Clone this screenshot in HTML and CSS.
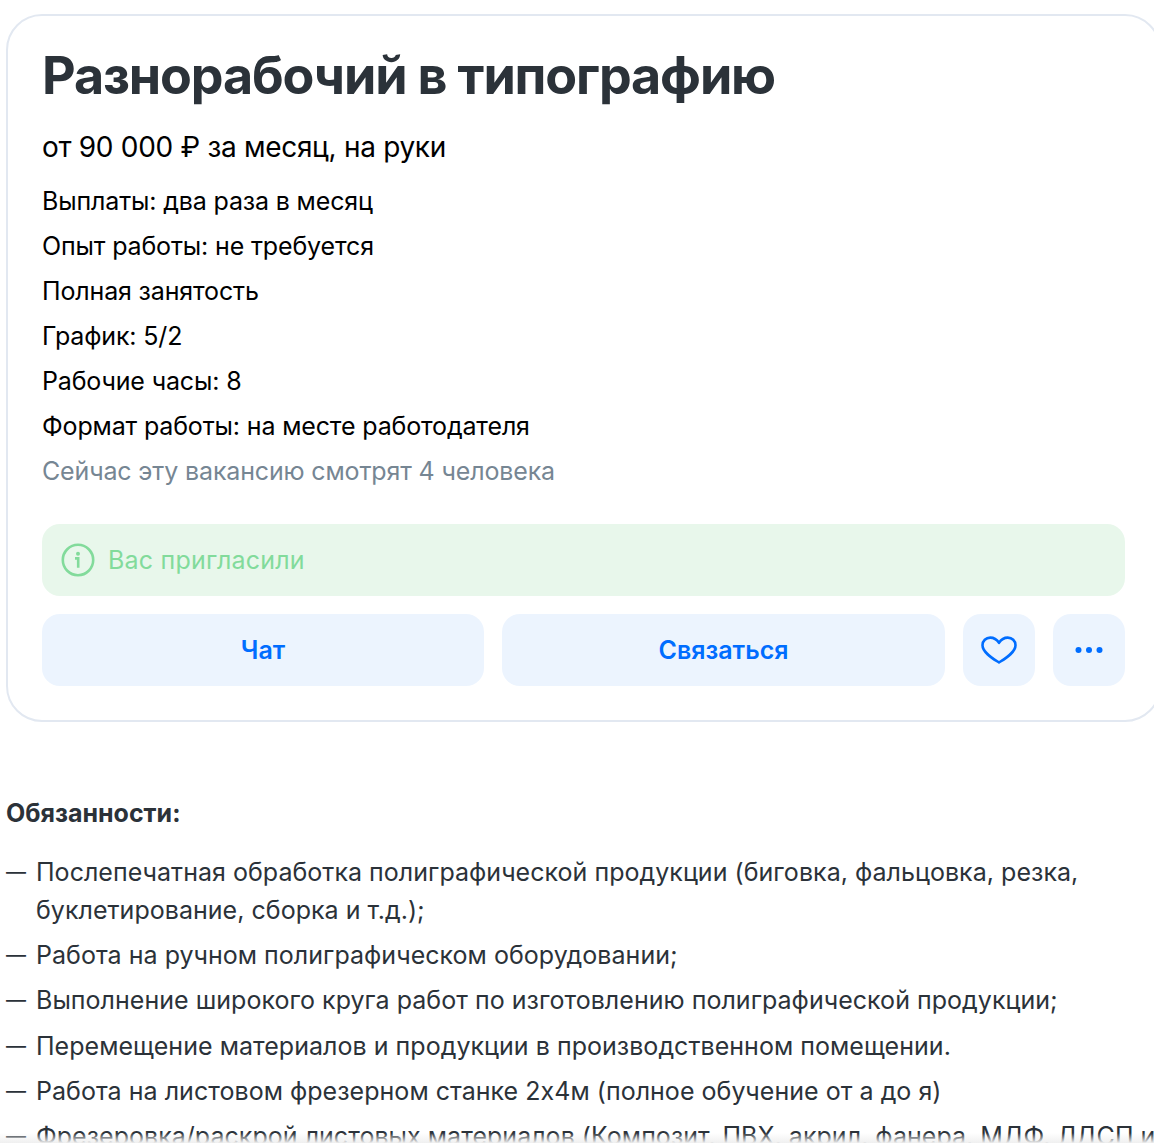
FILE: index.html
```html
<!DOCTYPE html>
<html lang="ru">
  <head>
    <title>Разнорабочий в типографию</title>
    <meta charset="utf-8" />
    <link rel="stylesheet" href="styles.css">
  </head>
  <body>
    <div class="page">
      <div class="vacancy-card">
        <h1 class="vacancy-title">Разнорабочий в типографию</h1>
        <p class="salary">от 90 000 ₽ за месяц, на руки</p>
        <p class="info-row">Выплаты: два раза в месяц</p>
        <p class="info-row">Опыт работы: не требуется</p>
        <p class="info-row">Полная занятость</p>
        <p class="info-row">График: 5/2</p>
        <p class="info-row">Рабочие часы: 8</p>
        <p class="info-row">Формат работы: на месте работодателя</p>
        <p class="info-row viewers">Сейчас эту вакансию смотрят 4 человека</p>

        <div class="invite-box">
          <svg class="invite-icon" width="34" height="34" viewBox="0 0 34 34" fill="none">
            <circle cx="17" cy="17" r="15.2" stroke="currentColor" stroke-width="2.6"/>
            <circle cx="17" cy="10.8" r="2" fill="currentColor"/>
            <path d="M14 15.400h3.200v9.400" stroke="currentColor" stroke-width="2.6"/>
          </svg>
          <span>Вас пригласили</span>
        </div>

        <div class="actions">
          <button type="button" class="btn btn-chat">Чат</button>
          <button type="button" class="btn btn-wide">Связаться</button>
          <button type="button" class="btn btn-square" aria-label="В избранное">
            <svg width="38" height="30" viewBox="0 0 38 30" fill="none">
              <path d="M19 27.500C13 23.600 2.500 17.500 2.500 10.200 2.500 5.800 6 2.600 10.200 2.600c3.600 0 6.600 1.800 8.800 5.200 2.200-3.400 5.200-5.200 8.800-5.200 4.200 0 7.700 3.200 7.700 7.600 0 7.300-10.500 13.400-16.500 17.300Z" stroke="currentColor" stroke-width="2.600" stroke-linejoin="round"/>
            </svg>
          </button>
          <button type="button" class="btn btn-square" aria-label="Ещё">
            <svg width="30" height="8" viewBox="0 0 30 8" fill="currentColor">
              <circle cx="4.500" cy="4" r="3"/>
              <circle cx="15" cy="4" r="3"/>
              <circle cx="25.500" cy="4" r="3"/>
            </svg>
          </button>
        </div>
      </div>

      <div class="description">
        <p class="section-title">Обязанности:</p>
        <ul class="duties">
          <li>Послепечатная обработка полиграфической продукции (биговка, фальцовка, резка, буклетирование, сборка и т.д.);</li>
          <li>Работа на ручном полиграфическом оборудовании;</li>
          <li>Выполнение широкого круга работ по изготовлению полиграфической продукции;</li>
          <li>Перемещение материалов и продукции в производственном помещении.</li>
          <li>Работа на листовом фрезерном станке 2х4м (полное обучение от а до я)</li>
          <li>Фрезеровка/раскрой листовых материалов (Композит, ПВХ, акрил, фанера, МДФ, ЛДСП и</li>
        </ul>
      </div>
    </div>
    <div class="bottom-fade"></div>
  </body>
</html>
```

FILE: styles.css
```css
html, body {
    height: 100%;
    overflow: hidden;
}

body {
    margin: 0;
    background-color: white;
    font-family: "Inter", "Noto Sans", sans-serif;
    color: rgb(0, 0, 0);
}

.page {
    width: 1161px;
    height: 1143px;
    padding: 14px 0 0 6px;
    box-sizing: border-box;
    overflow: hidden;
}

.bottom-fade {
    position: absolute;
    left: 0;
    right: 0;
    bottom: 0;
    height: 10px;
    background: linear-gradient(to bottom, rgba(246, 246, 246, 0), rgb(240, 240, 240));
}

.vacancy-card {
    border: 2px solid rgb(226, 232, 241);
    border-radius: 36px;
    padding: 26px 34px 34px;
    box-sizing: border-box;
    height: 708px;
}

.vacancy-title {
    margin: 0;
    font-size: 52px;
    line-height: 68px;
    font-weight: 700;
    color: rgb(43, 50, 57);
    letter-spacing: -1.14px;
}

.salary {
    margin: 17px 0 18px;
    font-size: 28px;
    line-height: 40px;
    letter-spacing: -0.3px;
}

.info-row {
    margin: 13px 0 0;
    font-size: 25px;
    line-height: 32px;
    letter-spacing: -0.15px;
}

.viewers {
    color: rgb(118, 134, 147);
}

.invite-box {
    display: flex;
    align-items: center;
    gap: 13px;
    height: 72px;
    margin-top: 37px;
    padding-left: 19px;
    border-radius: 18px;
    background-color: rgb(232, 247, 235);
    color: rgb(130, 219, 155);
    font-size: 25px;
    letter-spacing: 0.2px;
}

.actions {
    display: flex;
    gap: 18px;
    margin-top: 18px;
}

.btn {
    display: flex;
    align-items: center;
    justify-content: center;
    height: 72px;
    padding: 0;
    border: none;
    border-radius: 18px;
    background-color: rgb(236, 244, 254);
    color: rgb(0, 109, 255);
    font-family: inherit;
    font-size: 25px;
    font-weight: 600;
}

.btn-chat {
    flex: 0 0 442px;
}

.btn-wide {
    flex: 1;
}

.btn-square {
    width: 72px;
    flex: none;
}

.description {
    margin-top: 75px;
    color: rgb(43, 50, 57);
}

.section-title {
    margin: 0;
    font-size: 25px;
    line-height: 32px;
    font-weight: 700;
}

.duties {
    list-style: none;
    margin: 24px 0 0;
    padding: 0;
}

.duties li {
    position: relative;
    padding-left: 30px;
    margin-bottom: 7.2px;
    font-size: 25px;
    line-height: 38px;
    letter-spacing: 0.03px;
}

.duties li::before {
    content: "—";
    position: absolute;
    left: 0;
    font-size: 20px;
}
```
